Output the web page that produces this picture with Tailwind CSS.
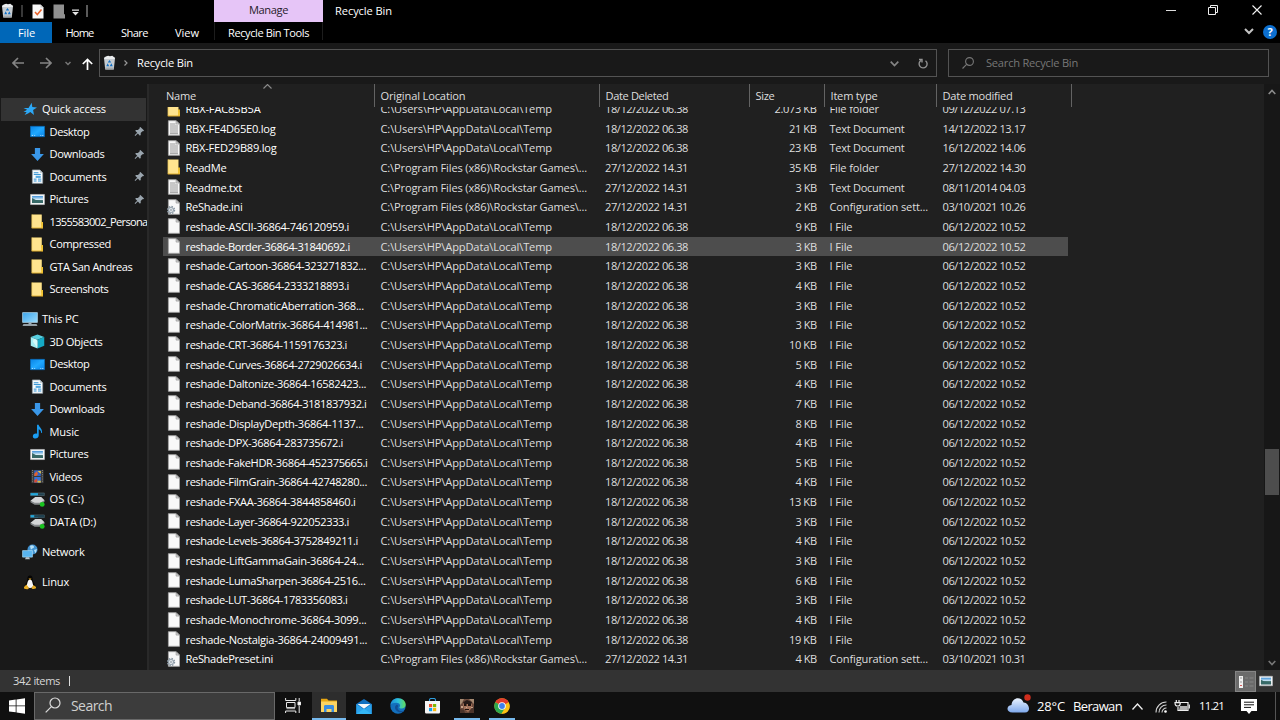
<!DOCTYPE html>
<html lang="en">
<head>
<meta charset="utf-8">
<title>Recycle Bin</title>
<script src="https://cdn.jsdelivr.net/npm/@tailwindcss/browser@4"></script>
</head>
<body class="w-[1280px] h-[720px] overflow-hidden bg-[#191919] text-white font-['Open_Sans','Noto_Sans',sans-serif] text-[11.1px] leading-[20px] whitespace-nowrap">
<svg class="absolute w-0 h-0">
  <defs>
    <linearGradient id="gBlue" x1="0" y1="0" x2="1" y2="1"><stop offset="0" stop-color="#0a84e6"/><stop offset=".5" stop-color="#20a8ff"/><stop offset="1" stop-color="#0a84e6"/></linearGradient>
    <linearGradient id="gSky" x1="0" y1="0" x2="0" y2="1"><stop offset="0" stop-color="#3d8fd6"/><stop offset=".5" stop-color="#d5ecf8"/><stop offset=".55" stop-color="#4f7d78"/><stop offset="1" stop-color="#1f4a52"/></linearGradient>
    <linearGradient id="gCloud" x1="0" y1="0" x2="0" y2="1"><stop offset="0" stop-color="#eaf3ff"/><stop offset="1" stop-color="#7fa9ec"/></linearGradient>
    <linearGradient id="gEdge" x1="0" y1="0" x2="1" y2="0"><stop offset="0" stop-color="#1b8ad8"/><stop offset=".5" stop-color="#2cc0dc"/><stop offset="1" stop-color="#63dd5a"/></linearGradient>
    <linearGradient id="gMon" x1="0" y1="0" x2="1" y2="1"><stop offset="0" stop-color="#3ba4ec"/><stop offset="1" stop-color="#9bdcfc"/></linearGradient>
  </defs>
  <symbol id="bin" viewBox="0 0 14 16"><path d="M1 3h12l-1.400 12.500H2.400z" fill="#c6ccd1"/><path d="M1 3.200 3 1.500l2.500-.9 2 .6L10 .8l3 2.400-1 1H2z" fill="#e9ecee"/><path d="M2.400 13.500h9.200l-.2 2H2.600z" fill="#a3a9ae"/><path d="M7 5.200l1.900 2.700H5.100zM3.500 12l1.500-3.200L6.700 12zM10.500 12 9 8.800 7.300 12z" fill="#1272c8"/></symbol>
  <symbol id="folder" viewBox="0 0 14 16"><path d="M.8.5h10.700v11l1.300 0V15H.8z" fill="#fbdd7c"/><path d="M.8.5h.8V15H.8z" fill="#e9bf4a"/><path d="M1.500 1h9.500v13H1.500z" fill="#ffe48f"/><path d="M11 8.500h1.900v6.600h-1.900z" fill="#f3c431"/><path d="M.8 14.600h12.100v.9H.8z" fill="#dba92b"/></symbol>
  <symbol id="file" viewBox="0 0 14 16"><path d="M1.400.7h7.800l3.300 3.300v11.300H1.400z" fill="#f8f8f8" stroke="#a6a6a6" stroke-width=".9"/><path d="M9.100.8v3.300h3.300z" fill="#d0d0d0" stroke="#8b8b8b" stroke-width=".6"/></symbol>
  <symbol id="text" viewBox="0 0 14 16"><use href="#file"/><path d="M3 4h5.500M3 6h8M3 8h8M3 10h8M3 12h8M3 13.700h8" stroke="#8d8d8d" stroke-width=".9"/></symbol>
  <symbol id="ini" viewBox="0 0 14 16"><use href="#file"/><circle cx="4" cy="11" r="3.400" fill="none" stroke="#8795a1" stroke-width="1.600" stroke-dasharray="1.500 1.170"/><circle cx="4" cy="11" r="2.500" fill="#e7ecef" stroke="#98a4ae" stroke-width="1.100"/><circle cx="4" cy="11" r=".8" fill="#6e7a84"/></symbol>
  <symbol id="star" viewBox="0 0 16 16"><path d="M9.700 1.800l.6 4.300 4.700.3-3.900 2.500.9 5-3.700-2.800-2.300 1.500L2.600 14l2-3H1.500l3.600-2.300L1.500 7h5z" fill="#2ca8f6"/></symbol>
  <symbol id="desktop" viewBox="0 0 16 16"><path d="M.5 2.500h15v11H.5z" fill="url(#gBlue)" stroke="#0670c4" stroke-width=".7"/><path d="M2 12.200h1.200M4.500 12.200h1M11 12.200h1M13 12.200h1.200" stroke="#cfeaff" stroke-width=".9"/></symbol>
  <symbol id="down" viewBox="0 0 16 16"><path d="M5.200 1h5.600v6.500h4L8 15 1.200 7.500h4z" fill="#3a97e8"/></symbol>
  <symbol id="doc" viewBox="0 0 16 16"><path d="M2.500 1h8l3 3v11.300h-11z" fill="#f6fafc" stroke="#95a2aa" stroke-width=".8"/><path d="M10.500 1v3h3z" fill="#b6c2ca"/><path d="M4 4h5M4 5.800h7.500M4 12.800h3M8.500 12.800H12M4 10.800h3M8.500 10.800H12" stroke="#258bd2" stroke-width="1"/><path d="M6 7.200h5.500v2.300H6z" fill="#52a7df"/></symbol>
  <symbol id="pic" viewBox="0 0 16 16"><path d="M.6 2.600h14.800v10.800H.6z" fill="#fafafa" stroke="#b8bdc0" stroke-width=".7"/><path d="M2.200 4.200h11.600v7.600H2.200z" fill="url(#gSky)"/><path d="M2.200 6.500l4 2 3.500.5 4.100 1.500v1.300H2.200z" fill="#376a68"/></symbol>
  <symbol id="pc" viewBox="0 0 16 16"><path d="M.6 1.600h14.800v9.800H.6z" fill="url(#gMon)" stroke="#b9dff5" stroke-width=".7"/><path d="M6.500 11.500h3v1.700h-3z" fill="#9cb0bd"/><path d="M1.500 13.200h13l1 1.500H.5z" fill="#bccbd4"/></symbol>
  <symbol id="cube" viewBox="0 0 16 16"><path d="M8 .5l7.200 2.800L8 6 .8 3.300z" fill="#58cfe0"/><path d="M.8 3.300 8 6v9.500L.8 12.600z" fill="#a5edf2"/><path d="M15.200 3.300 8 6v9.500l7.200-2.900z" fill="#15a9c4"/><path d="M4 5l4 2v8l-5-7z" fill="#d5f9f9"/></symbol>
  <symbol id="music" viewBox="0 0 16 16"><path d="M7.500.8h1.700c.3 2.800 4.300 3.900 3.600 8.700h-.8c-.1-2.200-1.300-3-2.700-3.800v6.500c0 4-6.300 4.100-6.300 1 0-2.700 2.800-3.600 4.500-2.700z" fill="#1a9cf1"/></symbol>
  <symbol id="video" viewBox="0 0 16 16"><path d="M1.500 1h13v14h-13z" fill="#3b3b3b"/><path d="M2.700 1v14M13.300 1v14" stroke="#8d8d8d" stroke-width="1" stroke-dasharray="1 1.300"/><path d="M4.500 1.500h7v6h-7z" fill="#2f64c8"/><path d="M4.500 5l3-2.500 1 3-2 2h-2z" fill="#e2632d"/><path d="M8 2h3.500v3z" fill="#e7c442"/><path d="M4.500 8.500h7v6h-7z" fill="#3674d8"/><path d="M4.500 12l3-2 .5 2.500-1 2H4.500z" fill="#d84b30"/><path d="M8 12.500h3.500v2H8z" fill="#dcb63c"/></symbol>
  <symbol id="drive" viewBox="0 0 16 16"><path d="M.5 1h14.800v2.800H.5z" fill="#21414f" stroke="#65808b" stroke-width=".5"/><path d="M.7 1.200h7.800v2.400H.7z" fill="#24a7da"/><path d="M.5 9.200 5.500 5.300h6.500l3.500 3.500-4.500 3.700-6 .1z" fill="#d3d5d6"/><path d="M.5 9.200l4.500 2.300h6l4.500-2.700v1.600L11 13.600H5L.5 11z" fill="#85898b"/><circle cx="13" cy="13.200" r="2.600" fill="#19c41f"/></symbol>
  <symbol id="drive2" viewBox="0 0 16 16"><use href="#drive"/><path d="M4.500 1.200h10.700v2.400H4.500z" fill="#21414f"/></symbol>
  <symbol id="net" viewBox="0 0 16 16"><circle cx="10.500" cy="5.500" r="5" fill="#4292cf"/><path d="M8 2c2-1.500 4-.5 4 1s-2 1-3 3zM12 6l3-1-1.500 4.500z" fill="#b4dff5"/><path d="M.6 6.600h9.800v6.500H.6z" fill="#58b5f0" stroke="#a9dbf7" stroke-width=".7"/><path d="M4 13.200h3l1 2H3z" fill="#b8c7cf"/></symbol>
  <symbol id="tux" viewBox="0 0 16 16"><path d="M8 1.500c3 0 2.500 3.500 3 5.500 1 2 2.600 4 2 6.500H3C2.500 11 4 9 5 7c.5-2 0-5.500 3-5.500z" fill="#050505"/><path d="M8 5.500c2 0 2.500 3 3 5s-.5 3.500-3 3.500-3.500-1.500-3-3.500 1-5 3-5z" fill="#f5f5f5"/><path d="M6.500 4.500h3L8 6z" fill="#eba91c"/><path d="M2 13l2.500-2.500L7 14c-1 2-3 1-5 .5zM14 13l-2.500-2L9.500 14c1 2 3 .8 4.500.3z" fill="#e8ad25"/></symbol>
  <symbol id="pin" viewBox="0 0 12 12"><path d="M7 1l4 4-1 .8-.8-.2-1.900 2 .1 2-.9.9-2.300-2.300L1.400 10.800l-.7-.7L3.500 7.300 1.300 5.200l.9-.9 2.100.1 2-1.900-.2-.8z" fill="#9aa5ae"/></symbol>
</svg>

<div class="flex flex-col w-[1280px] h-[720px]">
  <!-- title bar and ribbon tabs -->
  <header class="flex h-[43px] shrink-0 bg-black">
    <div class="flex flex-col w-[214px]">
      <div class="flex h-[22px] items-center">
        <svg class="w-[13px] h-[15px] ml-[1px] mb-px" viewBox="0 0 14 16"><use href="#bin"/></svg>
        <div class="w-[2px] h-3 bg-[#383838] ml-[7px]"></div>
        <svg class="w-3 h-[15px] ml-[9px] mt-[1px]" viewBox="0 0 12 15"><path d="M.5.5h8l3 3v11H.5z" fill="#f7f7f7"/><path d="M8.500.5v3h3z" fill="#ccc"/><path d="M3 8l2.300 2.500L9.500 5.500" fill="none" stroke="#e8622a" stroke-width="1.500"/></svg>
        <svg class="w-3 h-[15px] ml-[9px] mt-[1px]" viewBox="0 0 12 15"><path d="M.5.5h10.500v9.500l1 .5v4H.5z" fill="#909090"/></svg>
        <svg class="w-[7px] h-[7px] ml-[7px] mt-[2px]" viewBox="0 0 7 7"><path d="M0 .5h7v1.200H0zM.2 3h6.600L3.500 6.500z" fill="#e4e4e4"/></svg>
        <div class="w-[2px] h-3 bg-[#5a5a5a] ml-[7px]"></div>
      </div>
      <nav class="flex h-[21px] leading-[22px]">
        <div class="w-[52px] pl-[18px] bg-[#0067b8]"><span data-w="17">File</span></div>
        <div class="w-[55px] pl-[13.500px]"><span data-w="28">Home</span></div>
        <div class="w-[54px] pl-[14px]"><span data-w="27">Share</span></div>
        <div class="pl-[14px]"><span data-w="24">View</span></div>
      </nav>
    </div>
    <div class="flex flex-col w-[109px]">
      <div class="h-[22px] bg-[#e6c5f7] text-[#26202a] pl-[35px] leading-[19px]"><span data-w="39">Manage</span></div>
      <div class="h-[18px] border-x border-[#1d1d1d] pl-[13px] leading-[22px]"><span data-w="81">Recycle Bin Tools</span></div>
    </div>
    <div class="pl-3 leading-[21px]"><span data-w="57">Recycle Bin</span></div>
    <div class="flex flex-col ml-auto items-end">
      <div class="flex items-center h-[20px] pr-[18px]">
        <div class="w-[10px] h-px bg-[#ddd]"></div>
        <svg class="w-[10px] h-[10px] ml-8" viewBox="0 0 10 10" fill="none" stroke="#eee" stroke-width="1"><path d="M.5 2.500h7v7h-7zM2.500 2.500v-2h7v7h-2"/></svg>
        <svg class="w-[10px] h-[10px] ml-[34px]" viewBox="0 0 10 10" fill="none" stroke="#f3f3f3" stroke-width="1.100"><path d="M.5.500l9 9M9.500.500l-9 9"/></svg>
      </div>
      <div class="flex items-center h-[23px] pr-[3px]">
        <svg class="w-[10px] h-[7px] mr-[9px]" viewBox="0 0 10 7" fill="none" stroke="#c4c4c4" stroke-width="2"><path d="M1 1l4 4 4-4"/></svg>
        <div class="w-[14px] h-[14px] rounded-full bg-[#0c6fd0] text-center leading-[14px] font-bold text-[11px]">?</div>
      </div>
    </div>
  </header>

  <!-- address bar -->
  <section class="flex h-[41px] shrink-0 pt-[6px]">
    <div class="flex items-center w-[99px] h-7">
      <svg class="w-[12px] h-[12px] ml-3" viewBox="0 0 12 12" fill="none" stroke="#848484" stroke-width="1.700"><path d="M12 6H1M6 1L1 6l5 5"/></svg>
      <svg class="w-[12px] h-[12px] ml-4" viewBox="0 0 12 12" fill="none" stroke="#848484" stroke-width="1.700"><path d="M0 6h11M6 1l5 5-5 5"/></svg>
      <svg class="w-[6px] h-[5px] ml-[13px]" viewBox="0 0 6 5" fill="none" stroke="#777" stroke-width="1.500"><path d="M.5 1L3 3.500 5.500 1"/></svg>
      <svg class="w-[11px] h-[13px] ml-[11px] mt-[2px]" viewBox="0 0 11 13" fill="none" stroke="#fff" stroke-width="1.700"><path d="M5.500 12V1.500M.8 6l4.700-4.500L10.200 6"/></svg>
    </div>
    <div class="flex items-center w-[838px] h-7 border border-[#535353]">
      <svg class="w-[13px] h-[15px] ml-[3px] mb-[2px]" viewBox="0 0 14 16"><use href="#bin"/></svg>
      <svg class="w-[4px] h-[6px] ml-[8px]" viewBox="0 0 4 6" fill="none" stroke="#999" stroke-width="1.200"><path d="M.5.500L3 3 .5 5.500"/></svg>
      <span class="ml-[9px]" data-w="56">Recycle Bin</span>
      <svg class="w-[9px] h-[6px] ml-auto mr-[19px] mt-[1px]" viewBox="0 0 9 6" fill="none" stroke="#858585" stroke-width="1.700"><path d="M.7.700l3.800 3.800L8.300.700"/></svg>
      <svg class="w-[10px] h-[11px] mr-[8px]" viewBox="0 0 10 11" fill="none" stroke="#929292" stroke-width="1.400"><path d="M7.500 2.700A4 4 0 1 1 3 2.500M1 1.500h3v3"/></svg>
    </div>
    <div class="flex items-center w-[321px] h-7 ml-[11px] border border-[#535353] text-[#777]">
      <svg class="w-[12px] h-[12px] ml-[13px]" viewBox="0 0 12 12" fill="none" stroke="#777" stroke-width="1.100"><circle cx="7.500" cy="4.500" r="3.900"/><path d="M4.600 7.400L.5 11.500"/></svg>
      <span class="ml-3" data-w="92">Search Recycle Bin</span>
    </div>
  </section>

  <main class="flex h-[586px] shrink-0">
    <aside id="side" class="w-[147px] shrink-0 overflow-hidden pt-[14.200px]"></aside>
    <div class="w-[2px] bg-[#292929]"></div>
    <section class="flex flex-col w-[1115px] bg-[#202020] overflow-hidden">
      <div class="flex h-[23px] shrink-0 leading-[23px] text-[#dedede]">
        <div class="relative w-[226px] pl-[17px] border-r border-[#636363]"><span data-w="30">Name</span>
          <svg class="absolute left-[114px] top-0 w-[9px] h-[5px]" viewBox="0 0 9 5" fill="none" stroke="#8c8c8c" stroke-width="1.100"><path d="M.5 4.500l4-4 4 4"/></svg></div>
        <div class="w-[225px] pl-[5.500px] border-r border-[#636363]"><span data-w="85">Original Location</span></div>
        <div class="w-[150px] pl-[5.500px] border-r border-[#636363]"><span data-w="63">Date Deleted</span></div>
        <div class="w-[75px] pl-[5.500px] border-r border-[#636363]"><span data-w="19">Size</span></div>
        <div class="w-[112px] pl-[5.500px] border-r border-[#636363]"><span data-w="47">Item type</span></div>
        <div class="w-[135px] pl-[5.500px] border-r border-[#636363]"><span data-w="70">Date modified</span></div>
      </div>
      <div class="h-[563px] overflow-hidden"><div id="rows" class="-mt-[8px]"></div></div>
    </section>
    <div class="flex flex-col items-center w-4 bg-[#171717]">
      <svg class="w-[8px] h-[6px] mt-[5px]" viewBox="0 0 8 6" fill="none" stroke="#8b8b8b" stroke-width="1.600"><path d="M.7 5L4 1.500 7.300 5"/></svg>
      <div class="w-[14px] h-[46px] bg-[#4d4d4d] mt-[354px]"></div>
      <svg class="w-[8px] h-[6px] mt-auto mb-[4px]" viewBox="0 0 8 6" fill="none" stroke="#777" stroke-width="1.600"><path d="M.7 1L4 4.500 7.300 1"/></svg>
    </div>
  </main>

  <!-- status bar -->
  <footer class="flex items-center h-[22px] shrink-0 bg-[#333] text-[#d8d8d8]">
    <span class="ml-[13px]" data-w="47">342 items</span>
    <div class="w-px h-[10px] bg-[#ddd] ml-[9px]"></div>
    <div class="flex items-center justify-center ml-auto w-[21px] h-[21px] bg-[#6b6b6b] border border-[#858585] mt-[1px]">
      <svg class="w-[16px] h-[12px]" viewBox="0 0 16 12"><path d="M1 0h4v12H1z" fill="#f0f0f0"/><path d="M2 2h2M2 6h2" stroke="#999"/><path d="M2 9.500h2" stroke="#d65a5a"/><path d="M7 2h3M11.500 2h4M7 6h3M11.500 6h4M7 10h3M11.500 10h4" stroke="#8a8a8a" stroke-width=".9"/></svg>
    </div>
    <svg class="w-[14px] h-[14px] ml-[3px] mr-[7px]" viewBox="0 0 16 16"><use href="#pic"/></svg>
  </footer>

  <!-- taskbar -->
  <footer class="flex h-[28px] shrink-0 bg-[#101010]">
    <div class="flex items-center w-[34px]"><svg class="w-4 h-4 ml-[9px]" viewBox="0 0 16 16" fill="#fff"><path d="M0 2.500l6.700-1v6H0zM7.500 1.400L16 .2v7.300H7.500zM0 8.300h6.700v6L0 13.400zM7.500 8.300H16v7.500l-8.500-1.300z"/></svg></div>
    <div class="flex items-center w-[241px] bg-[#3c3c3c] border border-[#696969] text-[#d0d0d0] text-[14px]">
      <svg class="w-[16px] h-[16px] ml-[10px] mb-[2px]" viewBox="0 0 16 16" fill="none" stroke="#dcdcdc" stroke-width="1.200"><circle cx="10" cy="6" r="5"/><path d="M6.400 9.600L.7 15.300"/></svg>
      <span class="ml-[10px]" data-w="41">Search</span>
    </div>
    <div class="flex items-center justify-center w-[37px] pr-[2px] pb-[2px]"><svg class="w-[16px] h-[15px]" viewBox="0 0 16 15" fill="none" stroke="#e8e8e8"><path d="M.6 0v2.500h10.200V0M.6 15v-2h10.200v2M1.500 4.500h8.500v5H1.500zM14.200 0v3M14.200 8v7"/><path d="M1.500 10.500h8.500" stroke-width="1.500" stroke="#999"/><path d="M13 4h2.500v3H13z" fill="#fff"/></svg></div>
    <div class="flex flex-col items-center w-[34px] bg-[#2d2d2d] justify-between pt-[6px]"><svg class="w-4 h-[15px]" viewBox="0 0 16 15"><path d="M0 .8h6l1.500 1.700H16V14H0z" fill="#e8a713"/><path d="M0 3.500h16V14H0z" fill="#fcd462"/><path d="M3 14V8.500c0-1 .5-1.500 1.500-1.500h7c1 0 1.500.5 1.500 1.500V14h-2.500v-3h-5v3z" fill="#3a8de0"/></svg><div class="w-full h-[2px] bg-[#76b9ed]"></div></div>
    <div class="flex items-center justify-center w-[35px]"><svg class="w-4 h-[15px]" viewBox="0 0 16 15"><path d="M8 0l7.700 5v10H.3V5z" fill="#1070c0"/><path d="M.3 5l7.700 5.500L15.700 5v10H.3z" fill="#2ba3ec"/><path d="M1.500 5h13L8 9.700z" fill="#f4f8fb"/><path d="M.3 15L8 9.700l7.700 5.300z" fill="#33b6f5"/></svg></div>
    <div class="flex items-center justify-center w-[34px]"><svg class="w-4 h-4" viewBox="0 0 16 16"><circle cx="8" cy="8" r="7.700" fill="#1370bd"/><path d="M.4 7C1.500 1.500 5 .3 8 .3c5 0 7.700 3.500 7.700 6.200 0 2.800-2 4-4 4-1.700 0-2.400-.5-2.400-1 0-.6.8-.8.8-2 0-1.500-1.500-2.800-4-2.800C3.500 4.700 1.300 5.500.4 7z" fill="url(#gEdge)"/><path d="M7 6.500c-3 1.500-2.500 5.500 1 7.200 2.500 1.200 5 .3 6.500-1-2 1-6 .5-6.800-2-.4-1.300.3-2.200.6-2.700z" fill="#124e94"/></svg></div>
    <div class="flex items-center justify-center w-[34px]"><svg class="w-[15px] h-[16px]" viewBox="0 0 15 16"><path d="M4.500 4V2c0-1 .5-1.500 1.500-1.500h3c1 0 1.500.5 1.500 1.500v2" fill="none" stroke="#2f9fe0" stroke-width="1.100"/><path d="M0 3h15v11c0 1-.6 1.600-1.600 1.600H1.600C.6 15.600 0 15 0 14z" fill="#f5f5f5"/><path d="M4 6h3.200v3.200H4z" fill="#ef5027"/><path d="M8 6h3.200v3.200H8z" fill="#7db800"/><path d="M4 10h3.200v3.200H4z" fill="#12a2ea"/><path d="M8 10h3.200v3.200H8z" fill="#fab60b"/></svg></div>
    <div class="flex flex-col items-center w-[36px] justify-between pt-[7px]"><svg class="w-[14px] h-[14px]" viewBox="0 0 14 14"><path d="M0 0h14v14H0z" fill="#6b4a3c"/><path d="M0 0h4l-2 4-2 2zM9 0h5v5l-3-3z" fill="#a58a72"/><path d="M4 2h6l2 4-1 4-3 3-4-3-1-4z" fill="#a5745c"/><path d="M3 3l4-2 5 2-1 2H4z" fill="#251a17"/><path d="M4 5h2.500v2H4zM8 5h3v2H8zM5 10h4v1H5z" fill="#20130f"/><path d="M1 7h2v2H1zM11 8h2v1h-2zM6 8h1v1H6z" fill="#c9a58c"/><path d="M0 10l4 1 1 3H0zM10 11l4-3v6h-5z" fill="#4b342b"/></svg><div class="w-[26px] h-[2px] bg-[#76b9ed]"></div></div>
    <div class="flex flex-col items-center w-[33px] justify-between pt-[6px]"><svg class="w-4 h-4" viewBox="0 0 16 16"><circle cx="8" cy="8" r="7.700" fill="#fbc116"/><path d="M8 8L1.300 4.200A7.700 7.700 0 0 1 14.700 4.200z" fill="#e33b2e"/><path d="M8 8L1.300 4.200A7.700 7.700 0 0 0 7.500 15.700L11 10z" fill="#2da94f"/><path d="M8 4.300h6.700L11.500 10 7.500 15.700C15 15.700 17 9 14.700 4.300z" fill="#fbc116"/><circle cx="8" cy="8" r="3.800" fill="#fff"/><circle cx="8" cy="8" r="2.900" fill="#3f80ee"/></svg><div class="w-[26px] h-[2px] bg-[#76b9ed]"></div></div>
    <div class="flex items-center ml-auto">
      <svg class="w-[24px] h-[20px] mb-[4px]" viewBox="0 0 24 20"><path d="M5.500 18.500C-1 18.500-1 11.500 4.500 11 5 3 14.500 2 16.500 8.500c6 0 8 10 1.500 10z" fill="url(#gCloud)"/><circle cx="20.500" cy="3.500" r="3.200" fill="#cf2d1d"/></svg>
      <span class="text-[13px] ml-[6px]" data-w="28">28°C</span>
      <span class="text-[13px] ml-[8px]" data-w="49">Berawan</span>
      <svg class="w-[11px] h-[7px] ml-[10px]" viewBox="0 0 11 7" fill="none" stroke="#f1f1f1" stroke-width="1.300"><path d="M.5 6.500l5-5.500 5 5.500"/></svg>
      <svg class="w-[12px] h-[12px] ml-[12px] mt-[2px]" viewBox="0 0 12 12" fill="none" stroke="#d4d4d4" stroke-width="1.100"><path d="M1 11.500A10.300 10.300 0 0 1 11.500 1M4 11.500A7.300 7.300 0 0 1 11.500 4M7 11.500A4.400 4.400 0 0 1 11.500 7"/><circle cx="10.500" cy="10.500" r="1.300" fill="#fff" stroke="none"/></svg>
      <svg class="w-[16px] h-[12px] ml-[7px]" viewBox="0 0 16 12" fill="none" stroke="#eee" stroke-width="1.200"><path d="M6.500 2.500h7.500v8H4V7"/><path d="M6 6h7.400v4H5z" fill="#b0b0b0" stroke="none"/><path d="M15.300 4.500v4M2.300 0v2.500M5 0v2.500M1 2.700h5.300c0 2.300-.8 3.300-2.600 3.300S1 5 1 2.700z"/></svg>
      <span class="text-[11.500px] ml-[9px] mb-[1px]" data-w="25">11.21</span>
      <svg class="w-[16px] h-[15px] ml-[17px]" viewBox="0 0 16 15"><path d="M0 0h16v12h-5.500L8 15l-2.500-3H0z" fill="#fff"/><path d="M3 3.200h10M3 5.800h10M3 8.400h7" stroke="#111" stroke-width="1"/></svg>
      <div class="w-px h-[28px] bg-[#555] ml-[18px] mr-[4px]"></div>
    </div>
  </footer>
</div>

<script>
const T = 'C:\\Users\\HP\\AppData\\Local\\Temp', G = 'C:\\Program Files (x86)\\Rockstar Games\\...';
const D1 = '18/12/2022 06.38', D2 = '27/12/2022 14.31', M = '06/12/2022 10.52';
const typeW = {'Text Document':75,'File folder':49.5,'Configuration sett...':98.5,'I File':23};
// icon, name, name width, location, deleted, size, type, modified
const files = [
 ['folder','RBX-FAC85B5A',75,T,D1,'2.073 KB','File folder','09/12/2022 07.13'],
 ['text','RBX-FE4D65E0.log',90,T,D1,'21 KB','Text Document','14/12/2022 13.17'],
 ['text','RBX-FED29B89.log',91,T,D1,'23 KB','Text Document','16/12/2022 14.06'],
 ['folder','ReadMe',41,G,D2,'35 KB','File folder','27/12/2022 14.30'],
 ['text','Readme.txt',56.5,G,D2,'3 KB','Text Document','08/11/2014 04.03'],
 ['ini','ReShade.ini',57,G,D2,'2 KB','Configuration sett...','03/10/2021 10.26'],
 ...[['ASCII-36864-746120959.i',163.5,9],['Border-36864-31840692.i',164.5,3],['Cartoon-36864-323271832...',180.5,3],
 ['CAS-36864-2333218893.i',163.5,4],['ChromaticAberration-368...',178.5,3],['ColorMatrix-36864-414981...',182,3],
 ['CRT-36864-1159176323.i',161.5,10],['Curves-36864-2729026634.i',176.5,5],['Daltonize-36864-16582423...',180.5,4],
 ['Deband-36864-3181837932.i',181,7],['DisplayDepth-36864-1137...',178,8],['DPX-36864-283735672.i',157.5,4],
 ['FakeHDR-36864-452375665.i',182,5],['FilmGrain-36864-42748280...',181.5,4],['FXAA-36864-3844858460.i',170,13],
 ['Layer-36864-922052333.i',163.5,3],['Levels-36864-3752849211.i',172.5,4],['LiftGammaGain-36864-24...',178.5,3],
 ['LumaSharpen-36864-2516...',180,6],['LUT-36864-1783356083.i',162,3],['Monochrome-36864-3099...',181,4],
 ['Nostalgia-36864-24009491...',181.5,19]].map(a => ['file','reshade-'+a[0],a[1],T,D1,a[2]+' KB','I File',M]),
 ['ini','ReShadePreset.ini',87.5,G,D2,'4 KB','Configuration sett...','03/10/2021 10.31']
];
const s = (t, w) => `<span data-w="${w}">${t}</span>`;
document.getElementById('rows').innerHTML = files.map((f, i) => `<div class="flex h-[19.670px] leading-[20px] text-[#dedede] ${i === 7 ? 'bg-[#4d4d4d] w-[905px] ml-[14px]' : 'w-[905px] ml-[14px]'}">
<svg class="w-[14px] h-[16px] ml-[4px] mt-[1.500px] mr-[4.500px] shrink-0" viewBox="0 0 14 16"><use href="#${f[0]}"/></svg><div class="w-[195px] text-white shrink-0">${s(f[1],f[2])}</div><div class="w-[224.500px] shrink-0">${s(f[3], f[3] === T ? 171.5 : 206.5)}</div><div class="w-[132px] shrink-0">${s(f[4],83)}</div><div class="w-[79.500px] shrink-0 text-right">${s(f[5], f[5].length === 8 ? 42 : f[5].length === 5 ? 27.5 : 21)}</div><div class="w-[113px] pl-[13px] box-content shrink-0">${s(f[6],typeW[f[6]])}</div><div class="shrink-0">${s(f[7],83)}</div></div>`.replace(/>\n</g, '><')).join('');

// icon, label, width, level, pinned
const side = [['star','Quick access',64,0],['desktop','Desktop',40,1,1],['down','Downloads',55,1,1],['doc','Documents',57,1,1],['pic','Pictures',39,1,1],
 ['folder','1355583002_Persona',98,1],['folder','Compressed',61.5,1],['folder','GTA San Andreas',83,1],['folder','Screenshots',59,1],null,
 ['pc','This PC',36.5,0],['cube','3D Objects',53,1],['desktop','Desktop',40,1],['doc','Documents',57,1],['down','Downloads',55,1],['music','Music',29.5,1],['pic','Pictures',39,1],['video','Videos',32.5,1],['drive','OS (C:)',34.5,1],['drive2','DATA (D:)',46.5,1],null,
 ['net','Network',42.5,0],null,['tux','Linux',27,0]];
document.getElementById('side').innerHTML = side.map((r, i) => !r ? '<div class="h-[7.500px]"></div>' :
 `<div class="${i === 0 ? 'bg-[#333] ml-px w-[145px] pl-[21px]' : r[3] ? 'pl-[30px]' : 'pl-[22px]'} flex items-center h-[22.500px]"><svg class="${i === 0 ? 'w-[16px] h-[16px] mr-[4px]' : r[3] ? 'w-[15px] h-[15px] mr-[4.500px]' : 'w-[16px] h-[16px] mr-[4px]'} shrink-0"><use href="#${r[0]}" width="100%" height="100%"/></svg><div class="${r[4] ? 'w-[84px]' : ''} shrink-0">${s(r[1],r[2])}</div>${r[4] ? '<svg class="w-[11px] h-[11px] shrink-0" viewBox="0 0 12 12"><use href="#pin"/></svg>' : ''}</div>`).join('');

function fit() {
  const all = [...document.querySelectorAll('[data-w]')];
  all.forEach(e => { e.style.letterSpacing = '0px'; });
  const widths = all.map(e => e.getBoundingClientRect().width);
  all.forEach((e, i) => {
    e.style.letterSpacing = ((+e.dataset.w - widths[i]) / e.textContent.length).toFixed(3) + 'px';
  });
}
fit();
window.addEventListener('load', () => { fit(); requestAnimationFrame(fit); });
document.fonts.ready.then(fit);
new MutationObserver(fit).observe(document.head, {childList: true, subtree: true, characterData: true});
</script>
</body>
</html>
